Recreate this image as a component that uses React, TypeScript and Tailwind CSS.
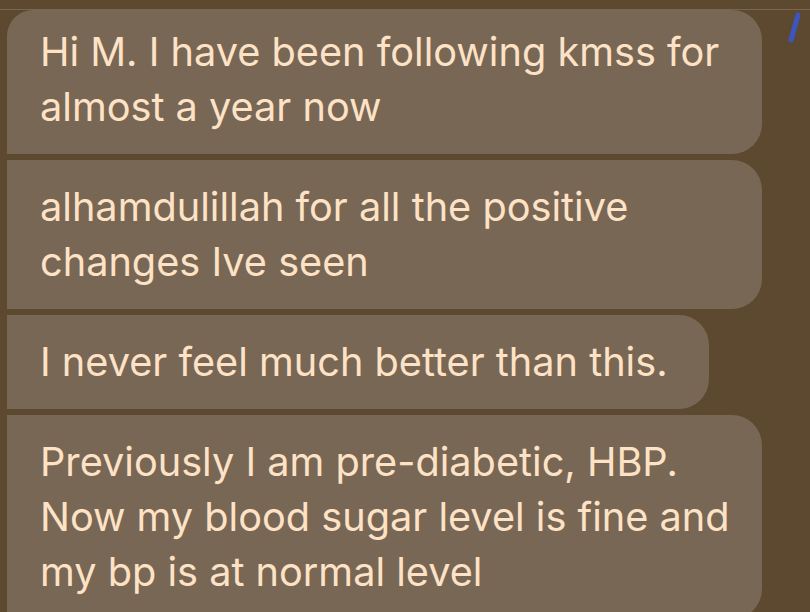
import React from 'react';

const messages = [
    { lines: ['Hi M. I have been following kmss for', 'almost a year now'], first: true, w: 'w-[755px]' },
    { lines: ['alhamdulillah for all the positive', 'changes Ive seen'], w: 'w-[755px]' },
    { lines: ['I never feel much better than this.'], w: 'w-[702px]' },
    {
        lines: ['Previously I am pre-diabetic, HBP.', 'Now my blood sugar level is fine and', 'my bp is at normal level'],
        w: 'w-[755px]',
    },
];

export default function App() {
    return (
        <div
            className="relative w-[810px] h-[612px] overflow-hidden bg-[#5d4830]"
            style={{ fontFamily: 'Inter, "Noto Sans", sans-serif' }}
        >
            {/* top divider */}
            <div className="h-[9px]" />
            <div className="h-px bg-[#7b6750]" />

            {/* scroll marker */}
            <svg className="absolute right-[8px] top-[12px]" width="16" height="32" viewBox="0 0 16 32">
                <path d="M12 3 L5 28" stroke="#3c55c0" strokeWidth="5" strokeLinecap="round" />
            </svg>

            {/* message group */}
            <div className="flex flex-col items-start gap-[6px] pl-[7px]">
                {messages.map((m, i) => (
                    <div
                        key={i}
                        className={`bg-[#786755] text-[#fde2c6] text-[39.7px] leading-[55px] pl-[33px] pr-[20px] ${m.first ? 'pt-[15px] pb-[19px] rounded-tl-[26px]' : 'pt-[20px] pb-[19px]'
                            } ${m.w} rounded-tr-[30px] rounded-br-[30px]`}
                    >
                        {m.lines.map((l, j) => (
                            <div key={j} className="whitespace-nowrap">{l}</div>
                        ))}
                    </div>
                ))}
            </div>
        </div>
    );
}
